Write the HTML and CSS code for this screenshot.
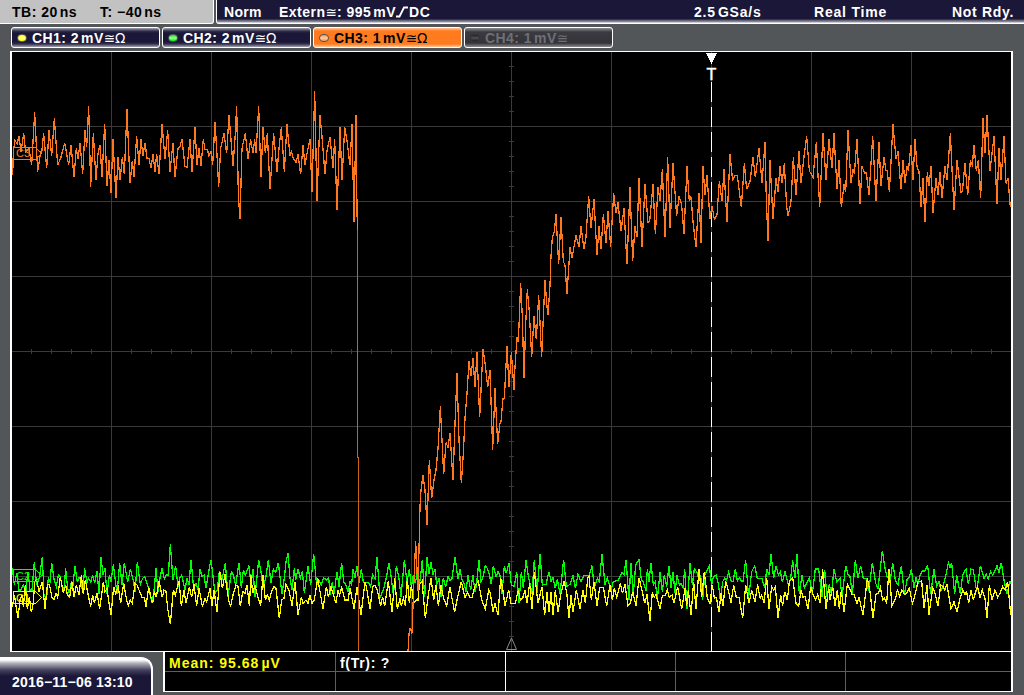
FILE: index.html
```html
<!DOCTYPE html>
<html lang="en">
<head>
<meta charset="utf-8">
<title>Oscilloscope</title>
<link rel="stylesheet" href="styles.css">
</head>
<body>
<div class="scope">
  <header class="topbar">
    <div class="timebase"><span class="tb">TB: 20<i class="thin"></i>ns</span><span class="offset">T: −40<i class="thin"></i>ns</span></div>
    <div class="trigger">
      <span class="mode">Norm</span>
      <span class="source">Extern<b class="sym">≅</b>: 995<i class="thin"></i>mV<svg class="edge" width="13" height="12" viewBox="0 0 13 12"><path d="M0 10.5H3.5L8 1.5H12"/></svg>DC</span>
      <span class="rate">2.5<i class="thin"></i>GSa/s</span>
      <span class="acq">Real Time</span>
      <span class="state">Not Rdy.</span>
    </div>
  </header>
  <nav class="channels">
    <div class="channel ch1"><i class="led"></i><span>CH1: 2<i class="thin"></i>mV<b class="sym">≅Ω</b></span></div>
    <div class="channel ch2"><i class="led"></i><span>CH2: 2<i class="thin"></i>mV<b class="sym">≅Ω</b></span></div>
    <div class="channel ch3"><i class="led"></i><span>CH3: 1<i class="thin"></i>mV<b class="sym">≅Ω</b></span></div>
    <div class="channel ch4"><i class="led"></i><span>CH4: 1<i class="thin"></i>mV<b class="sym">≅</b></span></div>
  </nav>
  <main class="display">
    <svg class="plot" width="999" height="599" viewBox="12 52 999 599">
      <defs>
        <pattern id="hticks" x="11" y="0" width="20" height="700" patternUnits="userSpaceOnUse"><rect class="tick" x="0" y="349" width="1" height="5"/></pattern>
        <pattern id="vticks" x="0" y="51" width="1024" height="15" patternUnits="userSpaceOnUse"><rect class="tick" x="509" y="0" width="5" height="1"/></pattern>
      </defs>
      <g class="grid">
        <path d="M111.5 52V651M211.5 52V651M311.5 52V651M411.5 52V651M511.5 52V651M611.5 52V651M711.5 52V651M811.5 52V651M911.5 52V651"/>
        <path d="M12 126.5H1011M12 201.5H1011M12 276.5H1011M12 351.5H1011M12 426.5H1011M12 501.5H1011M12 576.5H1011"/>
        <rect x="12" y="349" width="999" height="5" fill="url(#hticks)"/>
        <rect x="509" y="52" width="5" height="599" fill="url(#vticks)"/>
      </g>
      <path class="cursor" d="M711.5 82V651"/>
      <g class="trace green">
        <polyline transform="translate(0 535) scale(.33333)" points="37,100 43,150 50,115 57,165 63,165 70,150 78,165 84,110 90,165 96,165 103,82 110,150 118,128 127,65 132,185 140,187 145,130 150,140 155,84 163,138 169,155 175,120 181,125 188,165 193,155 197,100 203,160 208,175 214,140 219,150 225,92 232,142 237,128 243,135 248,175 254,100 261,142 266,130 272,142 278,120 284,145 291,108 297,178 303,65 309,120 315,100 321,178 328,120 333,140 340,88 351,178 359,83 366,150 373,83 383,142 391,102 400,138 405,170 412,82 421,148 428,130 434,125 440,142 446,160 456,203 463,160 468,100 474,170 480,128 486,100 493,132 498,120 505,120 511,28 519,135 527,92 534,155 540,128 545,120 555,165 561,130 567,150 573,74 581,160 588,145 594,165 600,102 606,125 612,120 618,160 626,110 633,74 645,175 652,165 658,110 667,130 676,83 684,185 694,110 700,120 707,150 717,83 724,160 730,105 736,120 747,92 753,150 759,102 765,187"/>
        <polyline transform="translate(250 535) scale(.33333)" points="9,102 15,187 26,75 33,110 39,160 47,130 55,75 63,145 70,102 77,112 85,83 96,178 104,120 108,80 114,55 120,130 126,165 133,100 137,135 144,102 151,130 157,108 163,175 174,92 182,150 191,56 200,150 206,135 214,150 221,128 230,135 236,128 241,180 247,140 252,178 261,110 267,155 275,83 281,140 288,150 294,168 300,140 305,150 309,102 315,128 321,92 327,145 334,102 340,142 356,142 362,155 368,118 375,132 381,65 390,187 400,165 409,128 417,83 424,130 430,178 436,130 439,92 447,130 453,187 463,74 471,142 478,102 484,155 490,120 496,145 502,110 506,170 512,120 517,75 524,187 531,65 537,118 543,82 549,118 555,102 560,150 567,130 573,187 580,128 587,155 594,125 600,138 606,130 615,65 624,132 630,102 636,135 642,145 648,170 654,120 662,165 669,120 675,172 680,145 687,74 693,140 698,130 706,92 712,100 718,120 724,148 730,92 738,125 744,110 750,120 756,178"/>
        <polyline transform="translate(500 535) scale(.33333)" points="0,120 6,178 13,92 19,115 27,83 34,150 43,155 50,110 57,205 64,110 70,160 78,74 85,125 91,150 96,178 103,74 111,175 120,56 127,150 138,148 147,110 153,140 159,128 166,160 172,132 180,178 191,74 199,155 210,148 219,120 226,160 234,118 243,140 252,121 268,121 276,92 283,158 292,130 298,140 306,56 315,150 322,128 333,168 340,140 355,135 366,112 372,120 378,74 387,195 393,83 400,178 407,90 417,74 424,135 430,140 438,168 442,102 447,140 453,83 460,150 466,140 472,195 480,110 487,170 493,120 500,155 507,92 513,158 519,110 525,175 531,120 538,150 543,145 549,158 554,102 561,222 570,83 577,150 583,102 590,110 597,135 602,120 608,195 614,120 620,110 628,92 635,150 640,125 648,120 655,145 661,195 668,140 674,130 680,135 686,112 693,138 699,140 706,102 712,138 718,128 725,140 729,140 737,75 746,187 755,110 764,92 772,130 780,130"/>
        <polyline transform="translate(760 535) scale(.33333)" points="0,130 6,130 14,160 20,102 27,120 33,56 41,130 48,92 55,120 61,110 67,140 75,110 85,150 92,130 98,75 105,130 111,56 118,178 126,120 133,158 140,145 148,128 157,175 166,102 176,102 186,187 194,105 201,187 208,148 214,178 222,102 230,140 240,130 246,187 257,92 264,118 270,125 277,178 286,75 294,130 302,92 310,130 318,130 326,168 337,83 347,145 354,160 367,47 374,95 382,128 388,120 391,135 398,83 406,135 414,150 424,92 433,178 442,130 448,128 454,102 462,160 468,125 473,150 480,120 487,108 494,108 503,92 512,178 522,102 530,155 537,140 543,168 548,155 556,128 565,83 570,97 575,83 584,178 590,120 601,178 608,120 618,102 625,148 633,102 640,105 650,170 661,92 672,130 679,118 685,132 692,110 698,120 704,110 711,92 717,112 724,83 731,130 741,178 750,140 753,145"/>
      </g>
      <g class="trace yellow">
        <polyline transform="translate(0 535) scale(.33333)" points="37,215 43,180 54,250 60,195 66,180 70,215 76,150 82,222 88,185 94,232 100,205 104,140 110,135 117,170 127,140 135,222 142,150 148,148 156,187 162,195 168,175 173,187 181,125 190,175 197,150 202,180 209,187 216,140 222,187 229,150 237,180 244,120 250,178 256,135 266,187 272,215 278,180 283,205 291,175 299,222 310,140 315,170 321,160 327,205 333,240 341,155 347,175 355,155 362,205 371,145 380,195 385,213 391,195 397,205 405,145 411,150 417,165 426,187 433,187 438,215 446,155 453,187 458,205 463,170 469,187 477,138 487,187 492,165 498,170 503,220 511,268 520,165 526,180 537,138 544,213 552,165 558,205 568,155 575,187 582,148 590,213 597,160 607,213 615,190 620,200 630,160 636,213 642,165 651,232 660,110 667,160 675,118 682,170 688,205 692,213 699,180 708,150 714,155 721,213 728,170 735,175 741,150 748,213 753,120"/>
        <polyline transform="translate(250 535) scale(.33333)" points="3,120 8,175 15,150 22,180 32,213 39,120 46,195 52,180 58,195 66,165 72,155 78,160 88,250 95,195 102,190 108,148 117,165 126,213 135,140 144,240 154,187 159,205 168,195 174,205 180,180 186,205 193,195 203,130 210,170 219,222 229,155 235,185 243,155 258,205 264,165 269,180 275,158 285,195 294,195 300,158 312,222 321,155 333,240 345,140 350,160 360,222 368,155 375,150 382,165 392,213 398,185 404,213 415,138 426,232 434,130 442,222 450,190 454,213 460,190 466,213 472,130 478,205 484,150 491,205 498,195 504,195 508,150 516,138 526,250 535,180 543,128 551,195 558,150 565,213 573,150 580,187 590,213 600,155 606,190 614,232 622,190 634,140 645,187 653,172 660,187 666,187 674,155 685,138 695,195 706,222 716,165 721,175 729,232 735,205 744,240 752,130"/>
        <polyline transform="translate(500 535) scale(.33333)" points="2,130 8,160 15,213 26,165 33,205 46,205 55,165 61,195 68,190 75,165 81,205 89,145 96,222 103,110 114,205 126,155 134,240 141,172 147,232 153,172 159,240 166,165 174,232 182,180 192,140 200,170 207,250 213,180 219,232 229,165 240,222 249,165 256,205 263,130 267,125 274,195 282,140 291,213 299,157 310,157 320,213 330,150 337,195 343,160 350,187 361,145 367,175 375,148 384,213 391,205 398,170 408,213 417,128 427,170 434,205 441,178 450,258 457,172 463,187 468,178 480,222 487,182 495,182 502,165 508,187 516,180 522,205 533,155 545,222 555,160 560,213 565,165 573,240 581,140 588,222 597,102 605,187 613,110 622,190 630,205 637,150 643,190 649,187 657,232 663,175 669,213 677,138 686,170 693,205 701,150 709,187 717,187 728,250 737,150 747,205 755,165 765,200 773,148 780,190"/>
        <polyline transform="translate(760 535) scale(.33333)" points="0,190 5,180 12,205 20,128 27,222 35,155 41,165 46,155 54,250 62,180 68,213 74,170 82,195 88,140 98,128 108,205 116,213 123,165 129,187 135,185 144,222 152,155 160,180 167,195 173,178 180,205 188,102 198,222 206,155 210,195 218,155 225,213 232,165 238,222 244,165 252,232 262,148 269,160 276,178 283,180 291,205 297,187 309,240 322,130 330,170 339,250 348,178 355,175 361,158 368,195 373,190 380,205 387,102 396,213 407,190 412,165 419,185 426,165 433,178 440,175 448,160 457,205 465,180 474,140 485,138 492,220 501,150 507,240 518,158 524,172 534,213 542,150 549,155 554,165 561,148 573,222 582,200 591,232 600,190 608,165 615,178 620,170 626,205 633,165 640,195 647,170 653,155 660,187 667,165 675,190 681,250 688,150 696,195 705,165 713,187 720,175 728,155 736,165 743,140 752,240"/>
      </g>
      <g class="trace orange">
        <path class="drop" d="M357.5 225V457H358.5V651"/>
        <polyline transform="translate(0 80) scale(.33333)" points="38,285 40,215 45,180 51,192 57,168 63,215 71,160 77,215 87,205 95,255 104,97 113,275 122,215 125,218 131,160 140,265 147,150 155,228 163,115 173,255 182,235 194,188 206,255 213,195 222,292 229,205 234,238 240,188 248,283 255,150 260,202 266,79 272,320 280,160 288,300 294,220 300,195 306,292 314,132 321,318 327,240 333,338 339,178 348,355 354,232 360,300 367,232 373,283 381,88 390,310 397,242 402,292 410,168 417,255 423,178 429,228 435,188 441,235 447,235 453,265 459,222 465,275 470,222 477,283 486,132 495,238 503,150 510,275 519,188 525,292 534,205 540,200 546,178 555,260 561,262 570,178 576,275 585,142 591,255 597,205 603,257"/>
        <polyline transform="translate(180 80) scale(.33333)" points="63,257 70,178 75,208 82,208 87,228 93,215 98,255 105,125 111,225 116,320 122,205 132,160 140,220 147,106 153,180 159,257 165,175 170,79 175,345 180,418 186,205 196,160 204,238 212,178 219,220 224,178 228,220 236,79 243,292 249,142 256,220 262,160 270,328 281,160 291,275 298,195 304,142 313,275 321,133 330,228 334,215 340,235 348,247 354,223 362,283 369,196 375,256 381,220 390,178 396,337 404,34 411,364 420,106 426,170 435,283 441,212 450,170 459,265 464,178 471,391 480,142 486,301 494,142 500,175 510,256 516,133 522,427 528,106 530,312 532,450"/>
        <polyline transform="translate(400 340) scale(.33333)" points="24,936 27,880 30,865 36,880 42,715 47,604 54,753 60,500 63,450 69,406 75,450 81,556 88,361 95,475 102,420 108,390 114,325 121,199 126,300 131,403 138,308 144,322 150,280 159,420 165,250 171,100 177,300 184,430 190,340 195,235 201,160 207,64 213,107 219,55 225,142 231,37 239,232 249,28 256,75 263,142 270,91 278,330 285,145 293,313 300,250 303,245 309,175 313,175 321,19 327,142 334,37 342,151"/>
        <polyline transform="translate(500 150) scale(.33333)" points="42,721 45,650 51,562 55,577 62,400 67,500 72,685 77,525 82,418 88,487 95,622 102,499 109,568 116,436 125,622 130,500 135,391 140,460 144,496 150,405 153,318 157,262 163,245 168,193 176,343 183,202 190,335 195,345 201,433 210,292 216,325 222,290 228,256 237,290 243,229 252,298 258,260 266,139 273,235 282,148 291,316 297,229 303,298 310,193 318,280 324,184 332,290 341,130 348,190 354,157 363,244 372,175 381,343 390,112 398,334 405,229 411,262 417,85 426,290 435,103 444,217 449,215 459,103 466,253 474,112 480,154 487,58 495,262 503,22 510,235 519,40 530,199 537,139 545,165 552,253 561,49 568,154 573,140 580,225 588,290 597,130 603,280 609,49 615,136 621,76 630,208 636,167 643,208 651,195 658,94 666,154 672,58 681,217 690,13 698,92 704,77 712,77 724,172 733,40 740,118 750,95 759,22 766,82"/>
        <polyline transform="translate(740 100) scale(.33333)" points="46,232 57,145 66,250 75,127 79,300 84,422 90,181 99,358 108,235 114,277 120,199 126,250 133,190 140,320 144,349 153,305 160,172 168,286 177,154 183,250 192,170 200,109 208,212 219,232 229,127 239,322 249,100 258,241 267,118 276,205 282,100 291,268 297,181 304,322 312,253 317,277 324,91 333,250 339,208 343,222 351,118 360,313 366,199 374,220 379,218 387,286 398,109 408,304 417,127 423,259 432,172 438,212 442,212 448,277 459,73 468,178 474,154 483,268 489,181 495,250 501,199 505,213 513,136 519,241 525,118 531,200 537,215 543,322 549,235 555,367 562,217 567,259 573,199 579,340 588,235 594,286 600,217 606,295 615,199 621,241 631,100 642,331 651,181 663,277 667,275 675,190 683,286 691,182 697,195 702,136 709,213 715,181 722,295 729,55 735,160 741,46 750,213 762,109 771,313 777,145 783,241 792,109 798,250 804,235 811,322"/>
      </g>
      <g class="tag orange"><path d="M13 147.5H35.5L41.5 153.5L35.5 159.5H13Z"/><text x="16" y="157">C3</text></g>
      <g class="tag green"><path d="M13 569.5H35.5L41.5 575.5L35.5 581.5H13Z"/><text x="16" y="579.5">C2</text></g>
      <g class="tag yellow"><path d="M13 591.5H35.5L41.5 597.5L35.5 603.5H13Z"/><text x="16" y="601.5">C1</text></g>
      <path class="trigpos" d="M706 53H717L712 63.5H711Z"/>
      <text class="trigmark" x="711.5" y="80">T</text>
      <path class="center" d="M511.5 638L506.5 649.5H516.5Z"/>
    </svg>
  </main>
  <footer class="bottom">
    <div class="clock">2016−11−06 13:10</div>
    <div class="measurements">
      <div class="cell mean">Mean: 95.68<i class="thin"></i>µV</div>
      <div class="cell freq">f(Tr): ?</div>
      <div class="cell"></div>
      <div class="cell"></div>
      <div class="cell"></div>
      <div class="cell"></div>
      <div class="cell"></div>
      <div class="cell"></div>
      <div class="cell"></div>
      <div class="cell"></div>
    </div>
  </footer>
</div>
</body>
</html>
```

FILE: styles.css
```css
* { box-sizing: border-box; }
body { margin: 0; background: #525659; overflow: hidden; font: bold 14px/16px "Liberation Sans", Arial, sans-serif; color: #fff; white-space: nowrap; }
.scope { width: 1024px; height: 695px; display: flex; flex-direction: column; }
.thin { display: inline-block; width: 2px; }
.sym { font: 13.5px/12px "DejaVu Sans", sans-serif; letter-spacing: 0; }

.topbar { height: 24px; display: flex; gap: 2px; }
.timebase { width: 214px; padding: 4px 0 0 12px; display: flex; background: #c2c2c2; color: #000; border-right: 1px solid #fff; border-bottom: 1px solid #fff; border-bottom-right-radius: 3px; }
.tb { width: 88px; letter-spacing: .5px; }
.offset { letter-spacing: .5px; }
.trigger { flex: 1; padding: 4px 0 0 7px; display: flex; background: linear-gradient(#1a1738 19px, #55536b 20px, #9998a5 22px, #fff 23px); border-left: 1px solid #fff; border-bottom-left-radius: 3px; }
.mode { width: 55px; letter-spacing: .3px; }
.source { width: 415px; letter-spacing: .5px; }
.edge { fill: none; stroke: #fff; stroke-width: 1.8; vertical-align: -1px; }
.rate { width: 120px; letter-spacing: .8px; }
.acq { width: 138px; letter-spacing: .8px; }
.state { letter-spacing: .7px; }

.channels { height: 27px; padding: 3px 0 0 11px; display: flex; gap: 2px; }
.channel { width: 149px; height: 21px; padding-left: 5px; display: flex; align-items: center; gap: 5px; border: 1px solid #fff; border-radius: 3px; background: linear-gradient(#a4a3ae, #35324f 3px, #1a1738 5px, #1a1738 14px, #35324f 16px, #a4a3ae); letter-spacing: .45px; }
.led { width: 10px; height: 8px; border-radius: 4px; border: 1px solid #555; }
.ch1 .led { background: linear-gradient(#ff0, #ffff90 50%, #ff0); }
.ch2 .led { background: linear-gradient(#0e0, #a0ffa0 50%, #0e0); }
.ch3 { background: linear-gradient(#ffc49a, #ff7b20 3px, #ff7b20 16px, #ffc49a); color: #000; }
.ch3 .led { background: linear-gradient(#ff8b40, #ffd0b0 50%, #ff8b40); }
.ch4 { background: linear-gradient(#8c8c8e, #3b3a40 4px, #34333a 15px, #8c8c8e); color: #707074; }
.ch4 .led { background: linear-gradient(#222, #505050 50%, #222); border-color: #333; }

.display { width: 1003px; height: 601px; margin-left: 10px; border: solid #fff; border-width: 1px 2px; background: #000; }
.plot { display: block; }
.grid { shape-rendering: crispEdges; }
.grid path { fill: none; stroke: #3a3a3a; }
.tick { fill: #3a3a3a; }
.cursor { stroke: #fff; stroke-dasharray: 20 5; shape-rendering: crispEdges; }
.green { color: #0f0; }
.yellow { color: #ff0; }
.orange { color: #ff781e; }
.trace { fill: none; stroke: currentColor; shape-rendering: crispEdges; }
.trace polyline { stroke-width: 3.8; }
.drop { stroke: #cc6416; }
.tag path { fill: none; stroke: currentColor; shape-rendering: crispEdges; }
.tag text { font: 11px "Liberation Sans", sans-serif; fill: currentColor; }
.trigpos { fill: #fff; shape-rendering: crispEdges; }
.trigmark { font: 16px "Liberation Sans", sans-serif; fill: #fff; stroke: #fff; stroke-width: .5; text-anchor: middle; }
.center { fill: none; stroke: #8c8c8c; }

.bottom { height: 43px; display: flex; gap: 10px; }
.clock { width: 153px; margin-top: 5px; padding: 15px 0 0 12px; letter-spacing: .2px; background: linear-gradient(#fff 1px, #b5b4bf 4px, #45425f 11px, #1a1738 17px); border: solid #fff; border-width: 2px 2px 0 0; border-top-right-radius: 12px; }
.measurements { width: 850px; height: 40px; display: grid; grid-template-columns: 171px 170px 170px 170px 165px; grid-template-rows: 20px 19px; background: #000; border: solid #fff; border-width: 0 2px 1px; }
.cell { padding: 3px 4px; border-right: 1px solid #5e5e60; letter-spacing: .7px; }
.cell:nth-child(-n+5) { border-bottom: 1px solid #5e5e60; }
.cell:nth-child(5n+2) { border-right-color: #fff; }
.cell:nth-child(5n) { border-right: 0; }
.mean { color: #ff0; letter-spacing: 1px; }
```
